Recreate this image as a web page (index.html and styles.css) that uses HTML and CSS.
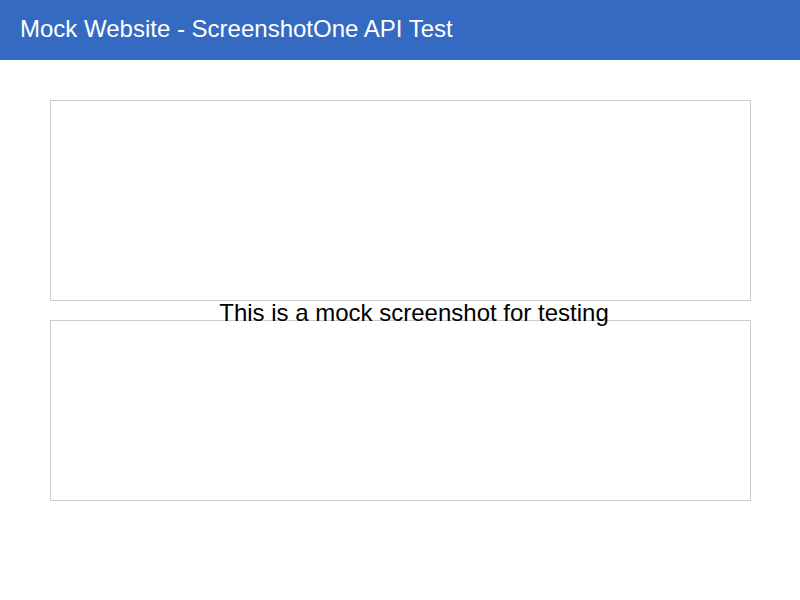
FILE: index.html
```html
<!DOCTYPE html>
<html>
<head>
<meta charset="utf-8">
<link rel="stylesheet" href="styles.css">
</head>
<body>
<header class="topbar">Mock Website - ScreenshotOne API Test</header>
<main class="content">
  <div class="panel panel-top"></div>
  <div class="panel panel-bottom"></div>
  <p class="caption">This is a mock screenshot for testing</p>
</main>
</body>
</html>
```
FILE: styles.css
```css
html, body {
  margin: 0;
  padding: 0;
  background: #ffffff;
  font-family: "Liberation Sans", Arial, sans-serif;
}
.topbar {
  height: 60px;
  background: #356ac3;
  color: #ffffff;
  font-size: 24px;
  line-height: 58px;
  padding-left: 20px;
  box-sizing: border-box;
}
.content {
  position: relative;
  padding: 40px 49px 0 50px;
  display: flex;
  flex-direction: column;
  gap: 19px;
}
.panel {
  border: 1px solid #cccccc;
}
.panel-top {
  height: 199px;
}
.panel-bottom {
  height: 179px;
}
.caption {
  position: absolute;
  left: 0;
  right: 0;
  top: 239px;
  margin: 0;
  padding-left: 28px;
  text-align: center;
  font-size: 24px;
  line-height: 28px;
  color: #000000;
}
```
